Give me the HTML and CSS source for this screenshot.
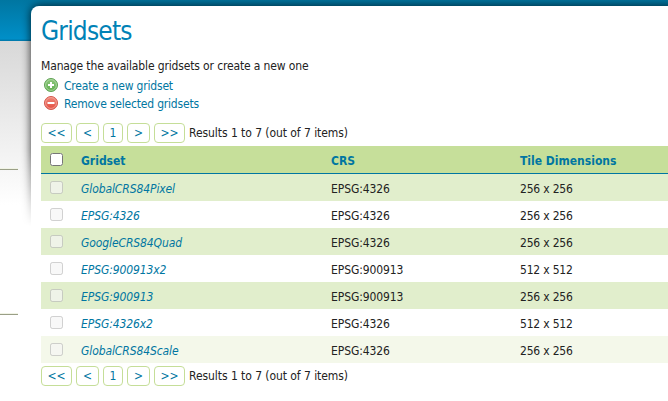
FILE: index.html
```html
<!DOCTYPE html>
<html lang="en">
<head>
<meta charset="utf-8">
<title>Gridsets</title>
<link rel="stylesheet" href="styles.css">
</head>
<body>
<div class="layout">
  <aside class="sidebar"><div class="section"></div><div class="section"></div></aside>
  <main class="page">
    <div class="shade"><div class="shade-box"></div></div>
    <div class="panel">
      <h1>Gridsets</h1>
      <p class="intro"><span>Manage the available gridsets or create a new one</span></p>
      <ul class="actions">
        <li><svg width="14" height="14" viewBox="0 0 14 14"><defs><linearGradient id="g" x2="0" y2="1"><stop stop-color="#8fc77f"/><stop offset="1" stop-color="#5fae4e"/></linearGradient></defs><circle cx="7" cy="7" r="6.5" fill="url(#g)" stroke="#5fa253"/><circle cx="7" cy="7" r="5.4" fill="none" stroke="#b5dca9" stroke-width=".8"/><path d="M7 4v6M4 7h6" stroke="#fff" stroke-width="2"/></svg><a class="create">Create a new gridset</a></li>
        <li><svg width="14" height="14" viewBox="0 0 14 14"><defs><linearGradient id="r" x2="0" y2="1"><stop stop-color="#ef8a7c"/><stop offset="1" stop-color="#e4493c"/></linearGradient></defs><circle cx="7" cy="7" r="6.5" fill="url(#r)" stroke="#d4574c"/><circle cx="7" cy="7" r="5.4" fill="none" stroke="#f4aaa0" stroke-width=".8"/><path d="M3.5 7h7" stroke="#fff" stroke-width="2"/></svg><a class="remove">Remove selected gridsets</a></li>
      </ul>
      <nav class="pager"><a class="wide">&lt;&lt;</a><a>&lt;</a><a class="num">1</a><a>&gt;</a><a class="wide">&gt;&gt;</a><span>Results 1 to 7 (out of 7 items)</span></nav>
      <table>
        <thead><tr><th class="check"><input type="checkbox"></th><th class="name">Gridset</th><th class="crs">CRS</th><th class="tile">Tile Dimensions</th></tr></thead>
        <tbody>
          <tr><td><input type="checkbox" disabled></td><td><a>GlobalCRS84Pixel</a></td><td>EPSG:4326</td><td>256 x 256</td></tr>
          <tr><td><input type="checkbox" disabled></td><td><a>EPSG:4326</a></td><td>EPSG:4326</td><td>256 x 256</td></tr>
          <tr><td><input type="checkbox" disabled></td><td><a>GoogleCRS84Quad</a></td><td>EPSG:4326</td><td>256 x 256</td></tr>
          <tr><td><input type="checkbox" disabled></td><td><a>EPSG:900913x2</a></td><td>EPSG:900913</td><td>512 x 512</td></tr>
          <tr><td><input type="checkbox" disabled></td><td><a>EPSG:900913</a></td><td>EPSG:900913</td><td>256 x 256</td></tr>
          <tr><td><input type="checkbox" disabled></td><td><a>EPSG:4326x2</a></td><td>EPSG:4326</td><td>512 x 512</td></tr>
          <tr class="last"><td><input type="checkbox" disabled></td><td><a>GlobalCRS84Scale</a></td><td>EPSG:4326</td><td>256 x 256</td></tr>
        </tbody>
      </table>
      <nav class="pager bottom"><a class="wide">&lt;&lt;</a><a>&lt;</a><a class="num">1</a><a>&gt;</a><a class="wide">&gt;&gt;</a><span>Results 1 to 7 (out of 7 items)</span></nav>
    </div>
  </main>
</div>
</body>
</html>
```
FILE: styles.css
```css
* { box-sizing: border-box; }
body {
  margin: 0;
  height: 401px;
  overflow: hidden;
  font: 12px/18px "DejaVu Sans Condensed", "DejaVu Sans", sans-serif;
  font-stretch: condensed;
  color: #222;
  background: linear-gradient(#0076a1, #008fc8 39px, #007bae 40px, #007bae 41px, #d8d8d8 41px, #fff 205px);
}
a { color: #0076a1; }
.layout { display: flex; height: 401px; }
.sidebar { width: 31px; padding-top: 25px; }
.section { width: 18px; height: 145px; border-bottom: 1px solid #9a9f87; box-shadow: inset 0 -1px 0 #f1f4e6; }
.page { position: relative; width: 637px; padding-top: 6px; }
.shade {
  position: absolute;
  inset: 0 0 auto -20px;
  height: 230px;
  padding: 6px 0 0 20px;
  overflow: hidden;
  mask-image: linear-gradient(#000 150px, transparent 226px);
}
.shade-box { width: 680px; height: 300px; border-radius: 8px 0 0 0; box-shadow: 0 0 10px rgba(0, 0, 0, .8); }
.panel { position: relative; height: 395px; padding: 9px 0 0 10px; background: #fff; border-radius: 8px 0 0 0; }
h1 { margin: 0; font-size: 26px; font-weight: 400; line-height: 32px; letter-spacing: -.8px; color: #0082b6; }
.intro { margin: 10px 0 0; height: 19px; letter-spacing: -.14px; }
.actions { margin: 0; padding: 0 0 0 3px; list-style: none; }
.actions li { display: flex; align-items: center; gap: 6px; height: 18px; letter-spacing: -.19px; }
.actions a { padding-top: 2px; }
.actions svg { flex: none; }
.pager { display: flex; align-items: center; gap: 4px; height: 20px; margin-top: 11px; white-space: nowrap; }
.pager span { letter-spacing: -.06px; }
.pager a { width: 23px; height: 20px; border: 1px solid #c5de98; border-radius: 4px; text-align: center; }
.pager .wide { width: 31px; }
.pager .num { width: 20px; }
.pager.bottom { margin-top: 3px; }
table { width: 627px; margin-top: 3px; border-collapse: separate; border-spacing: 0; table-layout: fixed; }
th, td { height: 27px; padding: 2px 0 0; text-align: left; line-height: 18px; white-space: nowrap; }
th { height: 28px; background: #c6df9a; border-bottom: 1px solid #0076a1; color: #0076a1; font-weight: 700; }
td { letter-spacing: -.1px; }
td:last-child { letter-spacing: -.2px; }
.check { width: 40px; }
.name { width: 250px; }
.crs { width: 189px; }
input { display: block; width: 13px; height: 13px; margin: -2px 0 0 9px; }
td a { font-style: italic; }
tbody tr:nth-child(odd) { background: #e1eecc; }
tbody .last:nth-child(odd) { background: #f4f8ea; }
```
